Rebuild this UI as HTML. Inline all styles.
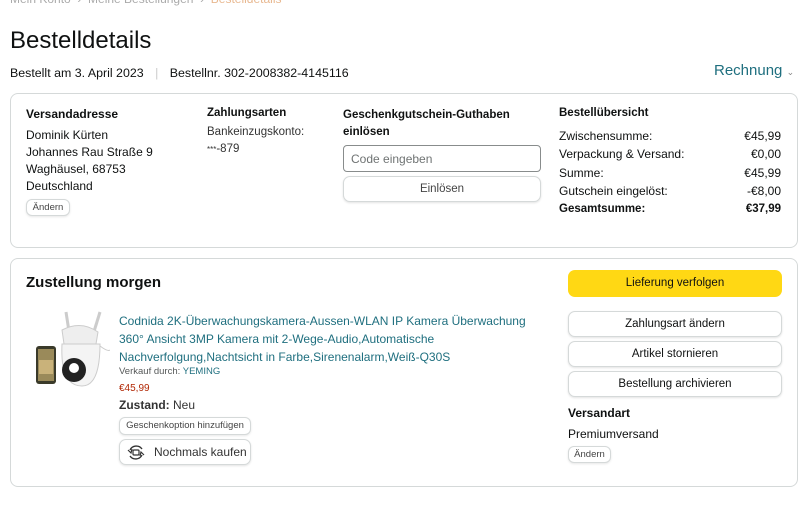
<!DOCTYPE html>
<html><head><meta charset="utf-8">
<style>
*{margin:0;padding:0;box-sizing:border-box}
body{width:800px;height:506px;background:#fff;font-family:"Liberation Sans","DejaVu Sans",sans-serif;color:#0f1111;position:relative;overflow:hidden;font-size:12px}
.a{position:absolute;white-space:nowrap}
.box{position:absolute;border:1px solid #d5d9d9;border-radius:8px}
.b{font-weight:bold}
.btn{position:absolute;border:1px solid #d5d9d9;border-radius:7px;background:#fff;text-align:center;box-shadow:0 1px 2px rgba(15,17,17,.12);font-size:11.5px}
.sm{position:absolute;border:1px solid #d5d9d9;border-radius:6px;background:#fff;font-size:9.5px;text-align:center;box-shadow:0 1px 2px rgba(15,17,17,.1);color:#444}
.link{color:#1f6f7f}
</style></head><body>
<div class="a" style="left:10px;top:-8px;font-size:12px;color:#aaa">Mein Konto &nbsp;›&nbsp; Meine Bestellungen &nbsp;›&nbsp; <span style="color:#e8b890">Bestelldetails</span></div>
<div class="a" style="left:10px;top:27px;font-size:24px">Bestelldetails</div>
<div class="a" style="left:10px;top:66px;font-size:12.4px">Bestellt am 3. April 2023 <span style="color:#ccc;margin:0 8px">|</span> Bestellnr. 302-2008382-4145116</div>
<div class="a link" style="left:714px;top:62px;font-size:15px">Rechnung <span style="font-size:9px;color:#888">⌄</span></div>

<div class="box" style="left:10px;top:93px;width:788px;height:155px"></div>
<div class="a b" style="left:26px;top:107px">Versandadresse</div>
<div class="a" style="left:26px;top:127px;line-height:17px">Dominik Kürten<br>Johannes Rau Straße 9<br>Waghäusel, 68753<br>Deutschland</div>
<div class="sm" style="left:26px;top:199px;width:44px;height:17px;line-height:15px">Ändern</div>

<div class="a b" style="left:207px;top:107px;font-size:11.5px">Zahlungsarten</div>
<div class="a" style="left:207px;top:124px;line-height:17px;font-size:11.5px;color:#333">Bankeinzugskonto:<br><span style="font-size:8px;vertical-align:top">***</span>-879</div>

<div class="a b" style="left:343px;top:107px;line-height:17px;font-size:11.5px">Geschenkgutschein-Guthaben<br>einlösen</div>
<div class="a" style="left:343px;top:145px;width:198px;height:27px;border:1px solid #888c8c;border-radius:4px;padding:6px 7px;color:#6f7373;font-size:12px">Code eingeben</div>
<div class="btn" style="left:343px;top:176px;width:198px;height:26px;line-height:24px;font-size:11.5px;color:#444">Einlösen</div>

<div class="a b" style="left:559px;top:107px;font-size:11.5px">Bestellübersicht</div>
<div class="a" style="left:559px;top:127px;line-height:18px;font-size:12px">Zwischensumme:<br>Verpackung &amp; Versand:</div>
<div class="a" style="left:559px;top:164px;line-height:18px;font-size:12px">Summe:<br>Gutschein eingelöst:</div>
<div class="a b" style="left:559px;top:203px;font-size:11.5px">Gesamtsumme:</div>
<div class="a" style="right:19px;top:127px;line-height:18px;text-align:right;font-size:12px">€45,99<br>€0,00</div>
<div class="a" style="right:19px;top:164px;line-height:18px;text-align:right;font-size:12px">€45,99<br>-€8,00</div>
<div class="a b" style="right:19px;top:203px;font-size:11.5px">€37,99</div>

<div class="box" style="left:10px;top:258px;width:788px;height:229px"></div>
<div class="a b" style="left:26px;top:274px;font-size:15px">Zustellung morgen</div>

<svg class="a" style="left:34px;top:310px" width="76" height="80" viewBox="0 0 76 80">
<rect x="2" y="36" width="20" height="38" rx="3" fill="#3a3a2a"/>
<rect x="4" y="39" width="16" height="32" fill="#9a8a5a"/>
<rect x="5" y="50" width="14" height="14" fill="#c9b27a"/>
<line x1="36" y1="28" x2="32" y2="2" stroke="#ccc" stroke-width="3"/>
<line x1="58" y1="28" x2="66" y2="2" stroke="#ccc" stroke-width="3"/>
<path d="M28 20 Q47 10 64 22 L62 34 L30 34Z" fill="#eee" stroke="#ccc"/>
<path d="M28 34 L66 34 Q66 76 48 76 Q26 76 28 34Z" fill="#f4f4f4" stroke="#ccc"/>
<circle cx="40" cy="60" r="12" fill="#222"/>
<circle cx="40" cy="58" r="5" fill="#fff"/>
<path d="M66 36 Q74 42 76 40" stroke="#ccc" fill="none"/>
</svg>

<div class="a link" style="left:119px;top:312px;line-height:18px;font-size:12px">Codnida 2K-Überwachungskamera-Aussen-WLAN IP Kamera Überwachung<br>360° Ansicht 3MP Kamera mit 2-Wege-Audio,Automatische<br>Nachverfolgung,Nachtsicht in Farbe,Sirenenalarm,Weiß-Q30S</div>
<div class="a" style="left:119px;top:366px;font-size:9.5px;color:#565959">Verkauf durch: <span class="link">YEMING</span></div>
<div class="a" style="left:119px;top:383px;font-size:10px;color:#b12704">€45,99</div>
<div class="a" style="left:119px;top:398px;font-size:12px;color:#333"><b>Zustand:</b> Neu</div>
<div class="sm" style="left:119px;top:417px;width:132px;height:18px;line-height:16px">Geschenkoption hinzufügen</div>
<div class="btn" style="left:119px;top:439px;width:132px;height:26px;line-height:24px;font-size:12px;text-align:left;padding-left:34px;color:#333">Nochmals kaufen</div>
<svg class="a" style="left:126px;top:444px" width="20" height="17" viewBox="0 0 20 17">
<path d="M4 6 A7 7 0 0 1 16 5" stroke="#333" stroke-width="1.4" fill="none"/>
<path d="M16 11 A7 7 0 0 1 4 12" stroke="#333" stroke-width="1.4" fill="none"/>
<path d="M2 6 L5 9 L6 5" stroke="#333" stroke-width="1.2" fill="none"/>
<path d="M18 11 L15 8 L14 12" stroke="#333" stroke-width="1.2" fill="none"/>
<rect x="7" y="6" width="6" height="5" rx="1" stroke="#333" stroke-width="1.2" fill="none"/>
</svg>

<div class="a" style="left:568px;top:270px;width:214px;height:27px;background:#ffd814;border-radius:7px;text-align:center;line-height:27px;font-size:11.5px">Lieferung verfolgen</div>
<div class="btn" style="left:568px;top:311px;width:214px;height:26px;line-height:24px">Zahlungsart ändern</div>
<div class="btn" style="left:568px;top:341px;width:214px;height:26px;line-height:24px">Artikel stornieren</div>
<div class="btn" style="left:568px;top:371px;width:214px;height:26px;line-height:24px">Bestellung archivieren</div>
<div class="a b" style="left:568px;top:406px;font-size:12px">Versandart</div>
<div class="a" style="left:568px;top:427px;font-size:12px">Premiumversand</div>
<div class="sm" style="left:568px;top:446px;width:43px;height:17px;line-height:15px">Ändern</div>
</body></html>
